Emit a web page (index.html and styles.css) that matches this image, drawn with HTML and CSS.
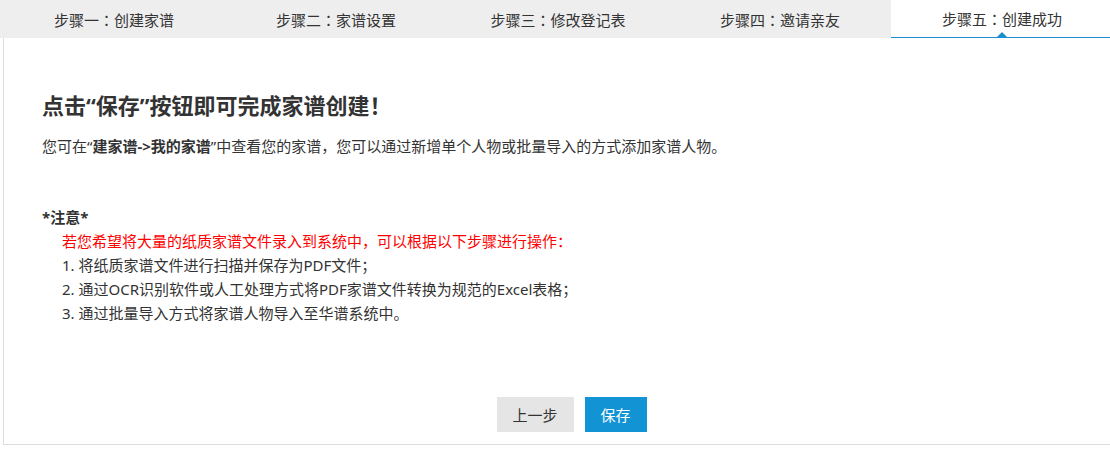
FILE: index.html
```html
<!DOCTYPE html>
<html lang="zh-CN">
<head>
<meta charset="utf-8">
<title>创建家谱</title>
<link rel="stylesheet" href="styles.css">
</head>
<body>
<div class="tabbar">
  <div class="tab">步骤一<span class="c">：</span>创建家谱</div>
  <div class="tab">步骤二<span class="c">：</span>家谱设置</div>
  <div class="tab">步骤三<span class="c">：</span>修改登记表</div>
  <div class="tab">步骤四<span class="c">：</span>邀请亲友</div>
  <div class="tab active">步骤五<span class="c">：</span>创建成功<span class="caret"></span></div>
</div>
<div class="panel">
  <h1 class="title">点击“保存”按钮即可完成家谱创建！</h1>
  <p class="desc">您可在“<b>建家谱-&gt;我的家谱</b>”中查看您的家谱，您可以通过新增单个人物或批量导入的方式添加家谱人物。</p>
  <div class="note">
    <div class="note-title">*注意*</div>
    <div class="note-body">
      <div class="red">若您希望将大量的纸质家谱文件录入到系统中，可以根据以下步骤进行操作<span class="c">：</span></div>
      <div>1. 将纸质家谱文件进行扫描并保存为PDF文件；</div>
      <div>2. 通过OCR识别软件或人工处理方式将PDF家谱文件转换为规范的Excel表格；</div>
      <div>3. 通过批量导入方式将家谱人物导入至华谱系统中。</div>
    </div>
  </div>
  <div class="actions">
    <button class="btn btn-prev">上一步</button>
    <button class="btn btn-save">保存</button>
  </div>
</div>
</body>
</html>
```

FILE: styles.css
```css
html, body {
  margin: 0;
  padding: 0;
  overflow: hidden;
  background: #fff;
}
body {
  font-family: "Noto Sans", "Noto Sans CJK SC", sans-serif;
  color: #333;
  font-size: 15px;
  width: 1113px;
}
.c {
  font-family: "Noto Sans CJK TC", sans-serif;
}
.tabbar {
  display: flex;
  background: #eeeeee;
  padding-left: 3px;
  height: 38px;
}
.tab {
  position: relative;
  width: 222px;
  flex: none;
  height: 38px;
  box-sizing: border-box;
  display: flex;
  align-items: center;
  justify-content: center;
  font-size: 15px;
  color: #333;
}
.tab.active {
  background: #fff;
  border-bottom: 1px solid #1a8fd0;
}
.caret {
  position: absolute;
  left: 50%;
  bottom: 0;
  margin-left: -5px;
  width: 0;
  height: 0;
  border-left: 5px solid transparent;
  border-right: 5px solid transparent;
  border-bottom: 5px solid #1a8fd0;
}
.panel {
  margin-left: 3px;
  border-left: 1px solid #dddddd;
  border-bottom: 1px solid #dddddd;
  padding: 52px 38px 12px;
}
.title {
  margin: 0;
  font-size: 22px;
  line-height: 30px;
  font-weight: bold;
  color: #333;
}
.desc {
  margin: 14px 0 0;
  line-height: 24px;
  font-size: 15px;
}
.desc b {
  font-weight: bold;
}
.note {
  margin-top: 47px;
  line-height: 24px;
  font-size: 15px;
}
.note-title {
  font-weight: bold;
}
.note-body {
  padding-left: 20px;
}
.red {
  color: #ff0000;
}
.actions {
  display: flex;
  justify-content: center;
  gap: 11px;
  margin-top: 72px;
  padding-left: 26px;
}
.btn {
  border: none;
  height: 35px;
  font-family: "Noto Sans", "Noto Sans CJK SC", sans-serif;
  font-size: 15px;
  padding: 0;
  cursor: pointer;
}
.btn-prev {
  width: 77px;
  background: #e5e5e5;
  color: #333;
}
.btn-save {
  width: 62px;
  background: #1193d4;
  color: #fff;
}
```
